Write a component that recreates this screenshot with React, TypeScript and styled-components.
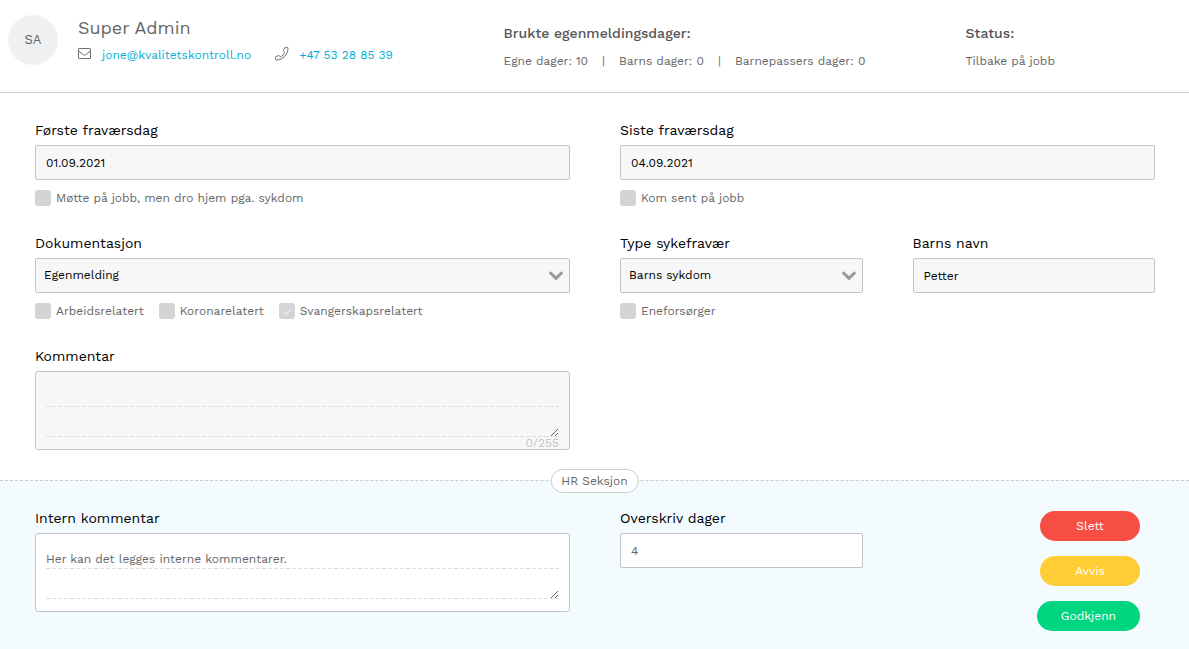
import React, { useState } from "react";
import styled, { createGlobalStyle, css } from "styled-components";

const GlobalStyle = createGlobalStyle`
  *, *::before, *::after { box-sizing: border-box; }
  body {
    margin: 0;
    background: #fff;
    color: #666;
    font-family: "Work Sans", Inter, "Liberation Sans", sans-serif;
    font-size: 12px;
    line-height: 16px;
  }
  input, select, textarea, button { font: inherit; margin: 0; }
`;

const Page = styled.div`
  display: flex;
  flex-direction: column;
  min-height: 100vh;
`;

const Header = styled.header`
  display: grid;
  grid-template-columns: 991fr 924fr 431fr;
  align-items: start;
  min-height: 93px;
  padding: 15px 8px;
  border-bottom: 1px solid #ccc;
`;

const Person = styled.div`
  display: flex;
  gap: 20px;
`;

const Avatar = styled.div`
  display: flex;
  align-items: center;
  justify-content: center;
  width: 50px;
  height: 50px;
  border-radius: 50%;
  background: #f0f0f0;
  font-size: 13px;
`;

const Name = styled.h1`
  margin: 0;
  font-size: 18px;
  font-weight: 400;
  line-height: 26px;
`;

const Contacts = styled.div`
  display: flex;
  gap: 24px;
  padding-top: 6px;
`;

const Contact = styled.div`
  display: flex;
  gap: 10px;
  color: #707070;

  svg { flex: none; }
`;

const ContactLink = styled.a`
  color: #00afd7;
  text-decoration: none;
`;

const Summary = styled.section`
  padding-top: 8px;
`;

const SummaryTitle = styled.h2`
  margin: 0 0 10px;
  color: #555;
  font-size: 14px;
  font-weight: 500;
  line-height: 20px;
`;

const SummaryList = styled.div`
  display: flex;
`;

const SummaryItem = styled.span`
  & + &::before {
    content: "|";
    margin: 0 14px;
  }
`;

const columns = css`
  display: grid;
  grid-template-columns: 1fr 1fr;
  column-gap: 50px;
`;

const Form = styled.main`
  ${columns}
  row-gap: 27px;
  padding: 27px 34px 30px 35px;
`;

const Split = styled.div`
  ${columns}
`;

const FieldBox = styled.div`
  display: flex;
  flex-direction: column;
  min-width: 0;
`;

const Label = styled.label`
  margin-bottom: 5px;
  color: #000;
  font-size: 14px;
  line-height: 20px;
`;

const controlBox = css`
  width: 100%;
  border: 1px solid #c4c4c4;
  border-radius: 2px;
  outline: none;
`;

const Input = styled.input<{ $plain?: boolean }>`
  ${controlBox}
  height: 35px;
  padding: 0 10px;
  background: ${(p) => (p.$plain ? "#fff" : "#f7f7f7")};
  color: ${(p) => (p.$plain ? "#666" : "#000")};
`;

const SelectBox = styled.div`
  position: relative;

  svg {
    position: absolute;
    top: 12px;
    right: 6px;
    pointer-events: none;
  }
`;

const Select = styled.select`
  ${controlBox}
  height: 35px;
  padding: 0 30px 2px 8px;
  appearance: none;
  background: #f7f7f7;
  color: #000;
`;

const Checks = styled.div`
  display: flex;
  flex-wrap: wrap;
  gap: 15px;
  margin-top: 10px;
`;

const CheckLabel = styled.label`
  display: flex;
  gap: 5px;
`;

const CheckInput = styled.input`
  display: grid;
  place-items: center;
  width: 16px;
  height: 16px;
  appearance: none;
  border-radius: 3px;
  background: #d4d4d4;

  &:checked::before {
    content: "";
    width: 8px;
    height: 5px;
    margin-bottom: 2px;
    border: solid #f4f4f4;
    border-width: 0 0 1px 1px;
    transform: rotate(-45deg);
  }
`;

const NoteBox = styled.div<{ $bg: string }>`
  ${controlBox}
  position: relative;
  padding: 5px 10px 12px;
  border-radius: 3px;
  background: ${(p) => p.$bg};
`;

const NoteArea = styled.textarea<{ $bg: string }>`
  display: block;
  width: 100%;
  height: 60px;
  padding: 5px 0 0;
  border: 0;
  outline: none;
  resize: both;
  color: #666;
  line-height: 30px;
  background:
    linear-gradient(${(p) => p.$bg} 29px, transparent 29px) 0 0 / 6px 30px,
    linear-gradient(90deg, #dedede 4px, transparent 4px) 0 0 / 6px 30px;
`;

const Counter = styled.span`
  position: absolute;
  right: 10px;
  bottom: 0;
  color: #c4c4c4;
  line-height: 12px;
`;

const HrSection = styled.section`
  ${columns}
  position: relative;
  flex: 1;
  align-content: start;
  padding: 27px 34px 18px 35px;
  border-top: 1px dashed #ccc;
  background: #f3fbff;
`;

const HrTitle = styled.h2`
  position: absolute;
  top: -12px;
  left: 50%;
  margin: 0;
  padding: 0 10px;
  border: 1px solid #ccc;
  border-radius: 12px;
  background: #fff;
  font-size: 12px;
  font-weight: 400;
  line-height: 22px;
  transform: translateX(-50%);
`;

const Actions = styled.div`
  display: flex;
  flex-direction: column;
  align-items: flex-end;
  gap: 15px;
  padding: 3px 15px 0 0;
`;

const Action = styled.button<{ $color: string }>`
  min-width: 100px;
  height: 30px;
  padding: 0 24px;
  border: 0;
  border-radius: 15px;
  background: ${(p) => p.$color};
  color: #fff;
  cursor: pointer;
`;

const MailIcon = () => (
  <svg width="14" height="14" viewBox="0 0 14 14" fill="none" stroke="currentColor" aria-hidden="true">
    <rect x="0.5" y="1.5" width="12" height="10" rx="0.5" />
    <path d="M0.8 4.2 L5.3 7.7 Q6.5 8.6 7.7 7.7 L12.2 4.2" />
  </svg>
);

const PhoneIcon = () => (
  <svg width="14" height="14" viewBox="0 0 14 14" fill="none" stroke="currentColor" strokeLinejoin="round" aria-hidden="true">
    <path d="M9.7 0.8 L12.5 0.5 Q13 0.6 13 1.1 C13 7.8 7.8 13 1.3 13 Q0.8 13 0.7 12.5 L0.5 10.2 Q0.5 9.8 0.9 9.6 L3.7 8.5 Q4.1 8.4 4.4 8.7 L5.5 10 Q8.7 8.4 9.9 5.4 L8.7 4.3 Q8.4 4 8.5 3.6 L9.3 1.2 Q9.4 0.9 9.7 0.8 Z" />
  </svg>
);

const Chevron = () => (
  <svg width="16" height="12" viewBox="0 0 16 12" fill="none" stroke="#999" strokeWidth="3" aria-hidden="true">
    <path d="M1.8 2.2 L8 8.4 L14.2 2.2" />
  </svg>
);

const Field = ({ id, label, children }: { id: string; label: string; children: React.ReactNode }) => (
  <FieldBox>
    <Label htmlFor={id}>{label}</Label>
    {children}
  </FieldBox>
);

const Check = ({ label, checked = false }: { label: string; checked?: boolean }) => (
  <CheckLabel>
    <CheckInput type="checkbox" defaultChecked={checked} />
    {label}
  </CheckLabel>
);

const Dropdown = ({ id, options }: { id: string; options: string[] }) => (
  <SelectBox>
    <Select id={id}>
      {options.map((o) => (
        <option key={o}>{o}</option>
      ))}
    </Select>
    <Chevron />
  </SelectBox>
);

export default function App() {
  const [comment, setComment] = useState("");

  return (
    <Page>
      <GlobalStyle />
      <Header>
        <Person>
          <Avatar>SA</Avatar>
          <div>
            <Name>Super Admin</Name>
            <Contacts>
              <Contact>
                <MailIcon />
                <ContactLink href="mailto:jone@kvalitetskontroll.no">jone@kvalitetskontroll.no</ContactLink>
              </Contact>
              <Contact>
                <PhoneIcon />
                <ContactLink href="tel:+4753288539">+47 53 28 85 39</ContactLink>
              </Contact>
            </Contacts>
          </div>
        </Person>
        <Summary>
          <SummaryTitle>Brukte egenmeldingsdager:</SummaryTitle>
          <SummaryList>
            <SummaryItem>Egne dager: 10</SummaryItem>
            <SummaryItem>Barns dager: 0</SummaryItem>
            <SummaryItem>Barnepassers dager: 0</SummaryItem>
          </SummaryList>
        </Summary>
        <Summary>
          <SummaryTitle>Status:</SummaryTitle>
          <SummaryItem>Tilbake på jobb</SummaryItem>
        </Summary>
      </Header>

      <Form>
        <Field id="first" label="Første fraværsdag">
          <Input id="first" defaultValue="01.09.2021" />
          <Checks>
            <Check label="Møtte på jobb, men dro hjem pga. sykdom" />
          </Checks>
        </Field>
        <Field id="last" label="Siste fraværsdag">
          <Input id="last" defaultValue="04.09.2021" />
          <Checks>
            <Check label="Kom sent på jobb" />
          </Checks>
        </Field>
        <Field id="documentation" label="Dokumentasjon">
          <Dropdown id="documentation" options={["Egenmelding"]} />
          <Checks>
            <Check label="Arbeidsrelatert" />
            <Check label="Koronarelatert" />
            <Check label="Svangerskapsrelatert" checked />
          </Checks>
        </Field>
        <Split>
          <Field id="type" label="Type sykefravær">
            <Dropdown id="type" options={["Barns sykdom"]} />
            <Checks>
              <Check label="Eneforsørger" />
            </Checks>
          </Field>
          <Field id="child" label="Barns navn">
            <Input id="child" defaultValue="Petter" />
          </Field>
        </Split>
        <Field id="comment" label="Kommentar">
          <NoteBox $bg="#f7f7f7">
            <NoteArea
              id="comment"
              $bg="#f7f7f7"
              maxLength={255}
              value={comment}
              onChange={(e) => setComment(e.target.value)}
            />
            <Counter>{comment.length}/255</Counter>
          </NoteBox>
        </Field>
      </Form>

      <HrSection>
        <HrTitle>HR Seksjon</HrTitle>
        <Field id="internal" label="Intern kommentar">
          <NoteBox $bg="#fff">
            <NoteArea id="internal" $bg="#fff" defaultValue="Her kan det legges interne kommentarer." />
          </NoteBox>
        </Field>
        <Split>
          <Field id="override" label="Overskriv dager">
            <Input id="override" $plain defaultValue="4" />
          </Field>
          <Actions>
            <Action type="button" $color="#f64e43">Slett</Action>
            <Action type="button" $color="#ffce35">Avvis</Action>
            <Action type="button" $color="#00d580">Godkjenn</Action>
          </Actions>
        </Split>
      </HrSection>
    </Page>
  );
}
